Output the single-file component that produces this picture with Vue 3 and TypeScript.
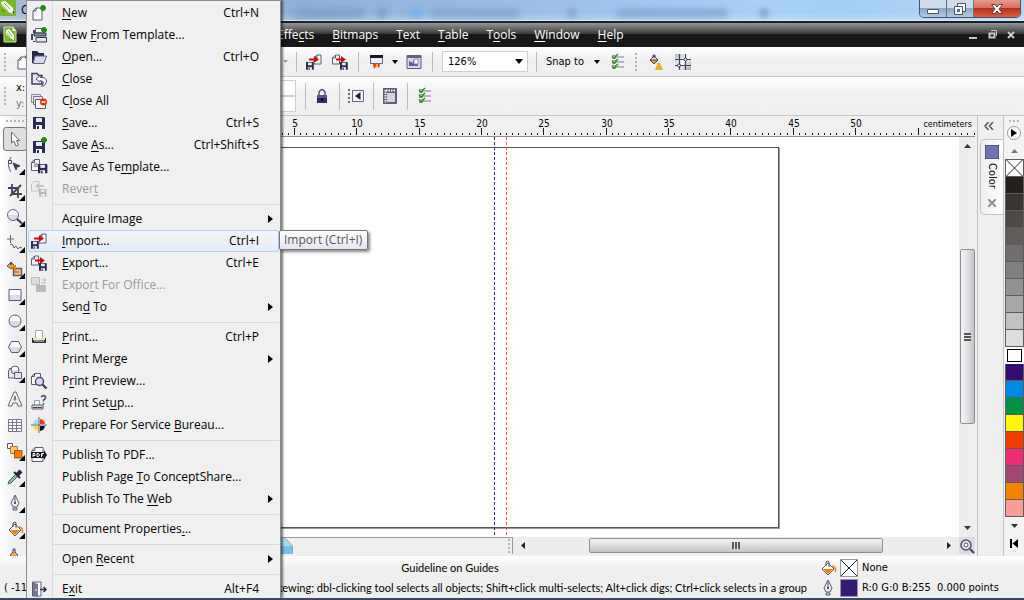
<script setup lang="ts">
import { ref } from 'vue'

interface MenuEntry {
  label?: string
  icon?: string
  keys?: string
  sub?: boolean
  off?: boolean
  hot?: boolean
}

const disk = (x: number, y: number, s: number, c = '#2b2b52') =>
  `<g transform="translate(${x} ${y}) scale(${s})"><path d="M0 0H11L12 1V12H0z" fill="${c}"/><path d="M3 1H9V5H3z" fill="#e8e8f4"/><path d="M3 8H9V12H3z" fill="#fff"/><path d="M4 9H6V12H4z" fill="${c}"/></g>`
const sheet = (x: number, y: number, w: number, h: number, c = '#5a5a78') =>
  `<path d="M${x + 3} ${y}H${x + w}V${y + h}H${x}V${y + 3}z" fill="#fbfbfe" stroke="${c}"/><path d="M${x} ${y + 3}H${x + 3}V${y}" fill="none" stroke="${c}"/>`
const star = (x: number, y: number) =>
  `<path d="M${x - 3} ${y}H${x + 3}M${x} ${y - 3}V${y + 3}M${x - 2} ${y - 2}L${x + 2} ${y + 2}M${x + 2} ${y - 2}L${x - 2} ${y + 2}" stroke="#1f8a12" stroke-width="1.8"/>`
const bucket = '<path d="M2 9L8 3L14 9L8 15z" fill="#fff" stroke="#5a5a78"/><path d="M3 9H13L8 14z" fill="#f08400"/><path d="M6 6V2Q8 0 9 2V7" fill="none" stroke="#44445e"/><path d="M12 6Q16 6 15.500 12" fill="none" stroke="#f08400" stroke-width="1.500"/>'
const checks = '<path d="M7 3H15M7 8H15M7 13H15" stroke="#7c7c98" stroke-width="1.200"/><path d="M3.500 1.500H6.500V4.500H3.500zM3.500 6.500H6.500V9.500H3.500zM3.500 11.500H6.500V14.500H3.500z" fill="#fff" stroke="#999"/><path d="M3 2L5 4L9 0M3 7L5 9L9 5M3 12L5 14L9 10" fill="none" stroke="#1f8a12" stroke-width="1.300"/>'
const arrowIn = 'fill="#c80f0f"'

const icons: Record<string, string> = {
  logo: '<path d="M0 0H16V16H0z" fill="#7ab62c"/><path d="M1 2L5 1L13 8L14 14L8 12L2 6z" fill="#fff"/><path d="M4 3L10 9M2.500 5L8 11" stroke="#7ab62c"/><path d="M1 8L7 12L3 12z" fill="#5b9a1c"/><path d="M12 12L14 11V14z" fill="#234"/>',
  docLogo: '<path d="M2 0H11L14 4V15H2z" fill="#7ab62c" stroke="#cfe6a8"/><path d="M10.500 0V4H14z" fill="#eef7df"/><path d="M4 3L7 2L12 8L12 13L8 11L4 7z" fill="#fff"/><path d="M6 4L10 9M5 6L8 10" stroke="#7ab62c"/>',
  new: sheet(2, 3, 9, 12) + star(12, 3),
  template: '<path d="M4.500 1.500H12.500V6H4.500z" fill="#fff" stroke="#5a5a78"/><path d="M3 3V6M1 7V13M3 14V15" stroke="#44445e" stroke-width="2"/><path d="M3 6H15V9H3z" fill="#8c8ca6" stroke="#333353"/><path d="M5 10.500H15.500V15H5z" fill="#e4e4ef" stroke="#333353"/>' + star(13, 3),
  open: '<path d="M1 2H6L8 4H13V14H1z" fill="#252a4a"/><path d="M4 7H15.500L13 14.500H2z" fill="#d9dbe8" stroke="#5a5f80"/>',
  close: '<path d="M1 2.500H6L8 4.500H11V13H1z" fill="#e2e3ec" stroke="#3b3f5c" stroke-width="1.500"/><path d="M5 8L9 4.500V6.500Q16 6 15.500 11Q14.500 15 10.500 15.500Q13.500 12 12 10.500L9 9.500V11z" fill="#fff" stroke="#55597a"/>',
  closeAll: '<path d="M.5 1.500H9.500V9.500H.5z" fill="#e5e5ef" stroke="#8a8aa0"/><path d="M2.500 3.500H11.500V11.500H2.500z" fill="#e5e5ef" stroke="#777790"/><path d="M4.500 6.500H14.500V15.500H4.500z" fill="#fff" stroke="#5a5a78"/><circle cx="12.500" cy="9" r="3.500" fill="#f2290e"/><path d="M10.500 9H14.500" stroke="#fff" stroke-width="1.500"/>',
  save: disk(2, 2, 1),
  saveAs: disk(2, 4, 1) + star(13, 3),
  saveTpl: sheet(0.5, 0.5, 8, 11) + '<path d="M3 5H7M3 7H7" stroke="#5a5a78"/>' + disk(7, 5, 0.78),
  revert: '<g opacity=".5"><path d="M.5 3L3 .5H8V10H.5z" fill="#eee" stroke="#999"/><path d="M4 5L8 2V4H13V6H8V8z" fill="#999"/></g>' + disk(8, 8, 0.62, '#b5b5b5'),
  import: disk(0, 8, 0.65) + sheet(8, 1, 7, 9) + `<path ${arrowIn} d="M3 4.500H8V2L13 5.500L8 9V6.500H3z"/>`,
  export: sheet(0.5, 1, 7, 9) + disk(8, 8, 0.65) + `<path ${arrowIn} d="M4 4.500H9V2L14 5.500L9 9V6.500H4z"/>`,
  office: '<path d="M.5 .5H8.500V7.500H.5z" fill="#ddd" stroke="#bbb"/><path d="M5 8H15V15H5z" fill="#b9b9b9"/><path d="M10 3H15M13 1L15 3L13 5M15 6H10" fill="none" stroke="#bbb"/>',
  print: '<path d="M4.500 1.500H11.500V9.500H4.500z" fill="#fff" stroke="#8fb0ac"/><path d="M1 9H15V14H1z" fill="#333344"/><path d="M2 9H14V11H2z" fill="#eeeebb"/><path d="M3 12H13" stroke="#ddd"/>',
  preview: sheet(0.5, 0.5, 9, 11) + '<circle cx="8.500" cy="8.500" r="4" fill="#d8dcf0" stroke="#4c4c68" stroke-width="1.500"/><path d="M11.500 11.500L15.500 15.500" stroke="#33334d" stroke-width="2"/>',
  setup: '<path d="M3.500 5.500H8.500V11H3.500z" fill="#fff" stroke="#7fa9b5"/><path d="M1 10H12V14H1z" fill="#dfe2cf" stroke="#5a5a78"/><path d="M2 12.500H11" stroke="#444"/><path d="M10 2Q12-.5 14.500 1.500Q15 4 12.500 5V6.500M12.500 8V9.500" fill="none" stroke="#4c4c68" stroke-width="1.500"/>',
  bureau: '<path d="M7 2A6 6 0 0 0 2 7H7z" fill="#a8dbe8"/><path d="M9 2A6 6 0 0 1 14 7H9z" fill="#ee3b19"/><path d="M7 14A6 6 0 0 1 2 9H7z" fill="#f5df3b"/><path d="M9 14A6 6 0 0 0 14 9H9z" fill="#111"/><path d="M8 0V16M0 8H16" stroke="#fff" stroke-width="2"/><path d="M8 0V16M0 8H16" stroke="#55556b"/>',
  pdf: sheet(1, 0.5, 11, 14) + '<path d="M0 5H13V3L16 8L13 13V11H0z" fill="#15151d"/><path d="M2 10V6.500H4V8.500H2M6 6.500H7.500L8.500 8L7.500 9.500H6zM10.500 10V6.500H13M10.500 8H12" fill="none" stroke="#fff"/>',
  exit: '<path d="M1.500 1H10V15H1.500z" fill="#fff" stroke="#5a5a78"/><path d="M2 1L7 3V16L2 15z" fill="#77778f"/><path d="M5 8V10" stroke="#fff"/><path d="M9 8.500H15M12.500 6L15 8.500L12.500 11" fill="none" stroke="#2f2f45" stroke-width="1.500"/>',
  pick: '<path d="M4.500 1V12L7 10L9 15L11.500 14L9.500 9.500H12.500z" fill="#fff" stroke="#66667f"/>',
  shape: '<path d="M4 0Q-1 8 4 15" fill="none" stroke="#5a5a78"/><path d="M1.500 3.500H4.500V6.500H1.500z" fill="#fff" stroke="#44445e"/><path d="M6 6L13 9L10 10L9 13z" fill="#3d3d5a" stroke="#3d3d5a"/>',
  crop: '<path d="M1 5H11V15M5 1V11H15M3 13L14 2" fill="none" stroke="#44445e" stroke-width="1.800"/>',
  zoom: '<circle cx="6" cy="6" r="5.500" fill="url(#shade)" stroke="#66667f"/><path d="M10 10L15 14.500" stroke="#3c3c56" stroke-width="2.200"/>',
  freehand: '<path d="M3.500 0V8M0 4H7" stroke="#66667f"/><path d="M3 10L5 9L7 13L9 11L11 14L13 12L15 13" fill="none" stroke="#5a5a78"/>',
  smart: '<path d="M0 5L4 1L8 5L4 8z" fill="#f0a030" stroke="#5a5a78"/><path d="M4 1V4" stroke="#44445e" stroke-width="1.500"/><path d="M6.500 7.500H14.500V14.500H6.500z" fill="#f3c27c" stroke="#5a5a78" stroke-width="1.500"/><path d="M8 4V11H12" fill="none" stroke="#f08400" stroke-width="2"/>',
  rect: '<path d="M2 2.500H14V13.500H2z" fill="url(#shade)" stroke="#5a5a78"/>',
  ellipse: '<circle cx="8" cy="8" r="6" fill="url(#shade)" stroke="#5a5a78"/>',
  polygon: '<path d="M4.500 2.500H11.500L14.500 8L11.500 13.500H4.500L1.500 8z" fill="url(#shade)" stroke="#5a5a78"/>',
  basic: '<path d="M1.500 6L3 3L12 13H1.500z" fill="#eee" stroke="#5a5a78"/><circle cx="8" cy="5" r="4" fill="url(#shade)" stroke="#5a5a78"/><path d="M7.500 7.500H14.500V13.500H7.500z" fill="#e4e4ef" stroke="#5a5a78"/>',
  text: '<path d="M1 15L7 1H9L15 15H11L10 12H6L5 15zM7 9H9L8 5z" fill="#f3f3fa" stroke="#66667f"/>',
  table: '<path d="M1.500 2.500H14.500V14.500H1.500zM1.500 5.500H14.500M1.500 8.500H14.500M1.500 11.500H14.500M5.500 2.500V14.500M9.500 2.500V14.500" fill="#fff" stroke="#77778f"/>',
  blend: '<path d="M.5 .5H5.500V5.500H.5z" fill="#fff" stroke="#5a5a78"/><path d="M3.500 3.500H10.500V10.500H3.500z" fill="#ffca6a" stroke="#b07b28"/><path d="M7.500 7.500H15V15H7.500z" fill="#f57b00" stroke="#a85510"/>',
  dropper: '<path d="M1 15L2 12L9 5L11 7L4 14z" fill="#8fb5b2" stroke="#47646b"/><path d="M7 3L13 9" stroke="#24243b" stroke-width="2"/><path d="M10 6L14 2" stroke="#24243b" stroke-width="4"/>',
  pen: '<path d="M8 0L4 8L6 12H10L12 8zM6 13H10V15H6z" fill="#eee" stroke="#5a5a78"/><path d="M8 1V8" stroke="#5a5a78"/><circle cx="8" cy="8" r="1" fill="#333"/>',
  bucket,
  interactive: '<path d="M3 8L7 4L11 8L7 12z" fill="#f0a050" stroke="#5a5a78"/><path d="M6 6V2H8V6" fill="#ddd" stroke="#44445e"/>',
  launcher: '<path d="M2.500 1.500H14.500V9.500H2.500z" fill="#eeeef6" stroke="#66667f"/><path d="M2 1H15V4H2z" fill="#17172a"/><path d="M5 10H12L11 14L8.500 12L6 15z" fill="#ee371b"/><path d="M8 10H10V13H8z" fill="#ffb500"/>',
  welcome: '<path d="M1 1.500H15V14.500H1z" fill="#d6d8ee" stroke="#5a5a78"/><path d="M1 1H15V4H1z" fill="#62627f"/><path d="M3 7L7 9V6H12V12H3z" fill="#5b5d94"/><path d="M8 5H12V10H8z" fill="#fff" stroke="#8a8cb4"/>',
  checks,
  grid: '<path d="M0 0H16V16H0z" fill="url(#sky)"/><path d="M4.500 0V16M10.500 0V16M0 5.500H16M0 11.500H16" stroke="#44445e" stroke-width="1.200"/><circle cx="10.500" cy="5.500" r="1.500" fill="#fff" stroke="#333"/><circle cx="4" cy="11.500" r="1.500" fill="#fff" stroke="#333"/>',
  spill: '<path d="M1 6L5 2L9 6L5 10z" fill="#e99a33" stroke="#44445e"/><path d="M1 6L5 2L9 6z" fill="#e6e6f0" stroke="#44445e"/><path d="M4 4V1H6V4" fill="none" stroke="#44445e"/><path d="M8.500 9H11L14 16H6z" fill="#eeb02a"/>',
  lock: '<path d="M5 8V4Q8-1 11 4V8" fill="none" stroke="#55556f" stroke-width="1.500"/><path d="M3 7H13V15H3z" fill="#2c2c62"/><path d="M3 7H13V10H3z" fill="#55558d"/><path d="M8 10V13" stroke="#111" stroke-width="2"/>',
  mirror: '<path d="M1 1V15" stroke="#66667f" stroke-width="2" stroke-dasharray="2 2"/><path d="M4.500 2.500H15.500V13.500H4.500z" fill="#f5f5fa" stroke="#66667f"/><path d="M12.500 4V12L7 8z" fill="#222235"/>',
  notebook: '<path d="M1.500 .5H14.500V15.500H1.500z" fill="#5d5d79" stroke="#5d5d79"/><path d="M5 5H13V14H5z" fill="#d4d4de"/><path d="M3.500 2V15M4 2.500H14" stroke="#fff" stroke-width="2" stroke-dasharray="1.500 1"/>',
  loupe: '<circle cx="7" cy="7" r="5" fill="#e4e6f3" stroke="#50506c" stroke-width="1.500"/><circle cx="7" cy="7" r="2" fill="#fff" stroke="#50506c"/><path d="M11 11L15 15" stroke="#44445e" stroke-width="2.200"/>',
}

const groups: MenuEntry[][] = [
  [
    { label: '&New', icon: 'new', keys: 'Ctrl+N' },
    { label: 'New &From Template...', icon: 'template' },
    { label: '&Open...', icon: 'open', keys: 'Ctrl+O' },
    { label: '&Close', icon: 'close' },
    { label: 'C&lose All', icon: 'closeAll' },
    { label: '&Save...', icon: 'save', keys: 'Ctrl+S' },
    { label: 'Save &As...', icon: 'saveAs', keys: 'Ctrl+Shift+S' },
    { label: 'Save As Te&mplate...', icon: 'saveTpl' },
    { label: 'Rever&t', icon: 'revert', off: true },
  ],
  [
    { label: 'Ac&quire Image', sub: true },
    { label: '&Import...', icon: 'import', keys: 'Ctrl+I', hot: true },
    { label: '&Export...', icon: 'export', keys: 'Ctrl+E' },
    { label: 'Expo&rt For Office...', icon: 'office', off: true },
    { label: 'Sen&d To', sub: true },
  ],
  [
    { label: '&Print...', icon: 'print', keys: 'Ctrl+P' },
    { label: 'Print Mer&ge', sub: true },
    { label: 'P&rint Preview...', icon: 'preview' },
    { label: 'Print Set&up...', icon: 'setup' },
    { label: 'Prepare For Service &Bureau...', icon: 'bureau' },
  ],
  [
    { label: 'Publis&h To PDF...', icon: 'pdf' },
    { label: 'Publish Page &To ConceptShare...' },
    { label: 'Publish To The &Web', sub: true },
  ],
  [{ label: 'Document Properties&...' }],
  [{ label: 'Open &Recent', sub: true }],
  [{ label: 'E&xit', icon: 'exit', keys: 'Alt+F4' }],
]

const split = (label = '') => {
  const i = label.indexOf('&')
  return [label.slice(0, i), label[i + 1], label.slice(i + 2)]
}

const menus = ['Effe&cts', '&Bitmaps', '&Text', '&Table', 'T&ools', '&Window', '&Help']
const tools = ['pick', 'shape', 'crop', 'zoom', 'freehand', 'smart', 'rect', 'ellipse', 'polygon', 'basic', 'text', 'table', 'blend', 'dropper', 'pen', 'bucket', 'interactive']
const plainTools = ['pick', 'text', 'table', 'interactive']
const swatches = ['#24201c', '#393533', '#4e4945', '#605c5b', '#706f6e', '#81807f', '#929292', '#a8a8a7', '#c2c1c0', '#dddddc', '#ffffff', '#330d70', '#0088e6', '#009149', '#fff700', '#ee3c00', '#f22c75', '#a34777', '#f58300', '#fb9d97']

const unit = 62.35
const firstMark = 267
const majors = Array.from({ length: 30 }, (_, i) => ({ x: Math.round(firstMark + i * unit), n: 5 + i * 5 }))
const minors = Array.from({ length: 300 }, (_, i) => Math.round(firstMark - unit + (i * unit) / 10))
const zoomLevel = ref('126%')
</script>

<template>
  <div class="app">
    <svg class="defs" aria-hidden="true">
      <linearGradient id="shade" x1="0" y1="0" x2="0" y2="1">
        <stop offset=".5" stop-color="#fff" /><stop offset=".5" stop-color="#dcdce8" />
      </linearGradient>
      <linearGradient id="sky" x1="0" y1="0" x2="1" y2="1">
        <stop offset="0" stop-color="#a9bccb" /><stop offset=".5" stop-color="#fff" /><stop offset="1" stop-color="#8fa3b5" />
      </linearGradient>
    </svg>

    <header class="title">
      <svg class="ic" viewBox="0 0 16 16" v-html="icons.logo"></svg>
      <span class="caption">C</span>
      <div class="ghosts"><i class="g1"></i><i class="g2"></i><i class="g3"></i><i class="g4"></i><i class="g5"></i><i class="g6"></i><i class="g7"></i></div>
      <div class="winbtns">
        <button aria-label="Minimize"><svg width="14" height="12"><path d="M1.500 6.500H12.500V10.500H1.500z" fill="#fff" stroke="#4b5468" /></svg></button>
        <button aria-label="Restore"><svg width="14" height="13"><path d="M4.500 1.500H12.500V9.500H4.500z" fill="#fff" stroke="#4b5468" /><path d="M1.500 4.500H9.500V12.500H1.500z" fill="#fff" stroke="#4b5468" /><path d="M4.500 7.500H6.500V9.500H4.500z" fill="#89a" stroke="#4b5468" /></svg></button>
        <button class="x" aria-label="Close"><svg width="14" height="12"><path d="M1.500 1.500H5L7 4L9 1.500H12.500L9 6L12.500 10.500H9L7 8L5 10.500H1.500L5 6z" fill="#fff" stroke="#5c3a42" /></svg></button>
      </div>
    </header>

    <nav class="menubar">
      <svg class="ic" viewBox="0 0 16 16" v-html="icons.docLogo"></svg>
      <div class="menus">
        <button v-for="m in menus" :key="m">{{ split(m)[0] }}<u>{{ split(m)[1] }}</u>{{ split(m)[2] }}</button>
      </div>
      <svg class="docbtns" width="46" height="10" fill="none" stroke="#c8c8c8"><path d="M0 8H8" stroke-width="2" /><path d="M20.500 3.500H25.500V7.500H20.500z" stroke-width="2" /><path d="M22 .5H27.500V6" /><path d="M39 2L45 8M45 2L39 8" stroke-width="2" /></svg>
    </nav>

    <div class="bar std">
      <i class="grip"></i>
      <div class="left"><svg class="ic" viewBox="0 0 16 16" v-html="icons.new"></svg><svg class="arr dim" width="5" height="3"><path d="M0 0H5L2.500 3z" /></svg></div>
      <i class="sep"></i>
      <button aria-label="Import"><svg class="ic" viewBox="0 0 16 16" v-html="icons.import"></svg></button>
      <button aria-label="Export"><svg class="ic" viewBox="0 0 16 16" v-html="icons.export"></svg></button>
      <i class="sep"></i>
      <button class="near" aria-label="Application launcher"><svg class="ic" viewBox="0 0 16 16" v-html="icons.launcher"></svg></button>
      <svg class="arr" width="6" height="4"><path d="M0 0H6L3 4z" /></svg>
      <button aria-label="Welcome screen"><svg class="ic" viewBox="0 0 16 16" v-html="icons.welcome"></svg></button>
      <i class="sep"></i>
      <span class="combo">
        <select v-model="zoomLevel" aria-label="Zoom level"><option>126%</option><option>100%</option></select>
        <svg width="8" height="5"><path d="M0 0H8L4 5z" /></svg>
      </span>
      <i class="sep"></i>
      <button class="snap">Snap to<svg width="6" height="4"><path d="M0 0H6L3 4z" /></svg></button>
      <button aria-label="Options"><svg class="ic" viewBox="0 0 16 16" v-html="icons.checks"></svg></button>
      <i class="grip in"></i>
      <button aria-label="Paint"><svg class="ic" viewBox="0 0 16 16" v-html="icons.spill"></svg></button>
      <button aria-label="Mesh"><svg class="ic" viewBox="0 0 16 16" v-html="icons.grid"></svg></button>
    </div>

    <div class="bar prop">
      <i class="grip"></i>
      <div class="left">
        <div class="xy"><label for="px">x:</label><label for="py" class="soft">y:</label></div>
        <div class="boxes"><input id="px" /><input id="py" /></div>
      </div>
      <i class="sep"></i>
      <button aria-label="Lock"><svg class="ic" viewBox="0 0 16 16" v-html="icons.lock"></svg></button>
      <i class="sep"></i>
      <button aria-label="Mirror"><svg class="ic" viewBox="0 0 16 16" v-html="icons.mirror"></svg></button>
      <i class="sep"></i>
      <button aria-label="Page layout"><svg class="ic" viewBox="0 0 16 16" v-html="icons.notebook"></svg></button>
      <i class="sep"></i>
      <button aria-label="Options"><svg class="ic" viewBox="0 0 16 16" v-html="icons.checks"></svg></button>
    </div>

    <main class="work">
      <aside class="tools">
        <i class="hgrip"></i>
        <button v-for="t in tools" :key="t" :class="{ on: t === 'pick', fly: !plainTools.includes(t) }" :aria-label="t">
          <svg class="ic" viewBox="0 0 16 16" v-html="icons[t]"></svg>
        </button>
      </aside>

      <section class="doc">
        <svg class="ruler">
          <path v-for="(x, i) in minors" :key="'m' + i" :d="`M${x + 0.5} 17V19`" />
          <g v-for="m in majors" :key="m.n">
            <path :d="`M${m.x + 0.5} 12V19`" />
            <text v-if="m.n < 55" :x="m.x + 1" y="11">{{ m.n }}</text>
          </g>
          <text class="end" x="100%" dx="-3" y="11">centimeters</text>
        </svg>
        <div class="view">
          <div class="canvas">
            <div class="page"></div>
            <i class="guide blue"></i>
            <i class="guide red"></i>
          </div>
          <div class="vscroll">
            <svg width="7" height="4"><path d="M0 4L3.500 0L7 4z" /></svg>
            <div class="track"><span class="thumb"><i></i></span></div>
            <svg width="7" height="4"><path d="M0 0H7L3.500 4z" /></svg>
          </div>
        </div>
        <div class="foot">
          <div class="pages"><svg width="12" height="16"><path d="M0 0H4L11.500 8V16H0z" fill="#a9dcf3" /><path d="M0 8H11V16H0z" fill="#74c2ea" /><path d="M4 0L11.500 8V16" fill="none" stroke="#8aa" /></svg><i class="grip"></i></div>
          <div class="hscroll">
            <svg width="4" height="7"><path d="M4 0V7L0 3.500z" /></svg>
            <div class="track"><span class="thumb"><i></i></span></div>
            <svg width="4" height="7"><path d="M0 0V7L4 3.500z" /></svg>
          </div>
          <button class="nav" aria-label="Navigator"><svg class="ic" viewBox="0 0 16 16" v-html="icons.loupe"></svg></button>
        </div>
      </section>

      <aside class="docker">
        <button class="fold" aria-label="Expand docker"><svg width="10" height="8" fill="none" stroke="#555" stroke-width="1.500"><path d="M4.500 0L1 4L4.500 8M9 0L5.500 4L9 8" /></svg></button>
        <div class="tab">
          <i></i><span>Color</span>
          <svg width="8" height="8" stroke="#909090" stroke-width="2"><path d="M0 0L8 8M8 0L0 8" /></svg>
        </div>
      </aside>

      <aside class="palette">
        <i class="hgrip"></i>
        <button class="play" aria-label="Palette menu"><svg width="6" height="8"><path d="M0 0L6 4L0 8z" /></svg></button>
        <svg class="pa" width="7" height="4" fill="#777"><path d="M0 4L3.500 0L7 4z" /></svg>
        <div class="chips">
          <button class="none" aria-label="No color"><svg viewBox="0 0 16 16"><path d="M0 0L16 16M16 0L0 16" stroke="#222" /></svg></button>
          <button v-for="s in swatches" :key="s" :class="{ sel: s === '#ffffff' }" :style="{ backgroundColor: s }" :aria-label="s"></button>
        </div>
        <svg class="pd" width="7" height="4" fill="#333"><path d="M0 0H7L3.500 4z" /></svg>
        <svg class="pe" width="8" height="9"><path d="M0 0H2V9H0zM8 0V9L2.500 4.500z" /></svg>
      </aside>
    </main>

    <footer class="status">
      <span class="pos">( -11</span>
      <div class="hint">
        <p class="mid">Guideline on Guides</p>
        <p>skewing; dbl-clicking tool selects all objects; Shift+click multi-selects; Alt+click digs; Ctrl+click selects in a group</p>
      </div>
      <div class="paint">
        <svg class="ic" viewBox="0 0 16 16" v-html="icons.bucket"></svg>
        <svg class="cell" viewBox="0 0 16 16"><path d="M0 0L16 16M16 0L0 16" stroke="#222" /></svg>
        <span>None</span>
        <svg class="ic" viewBox="0 0 16 16" v-html="icons.pen"></svg>
        <i class="cell ink"></i>
        <span>R:0 G:0 B:255&nbsp; 0.000 points</span>
      </div>
    </footer>

    <div class="drop" role="menu">
      <ul v-for="(g, gi) in groups" :key="gi">
        <li v-for="e in g" :key="e.label">
          <button role="menuitem" :disabled="e.off" :class="{ hot: e.hot }">
            <span class="slot"><svg v-if="e.icon" class="ic" viewBox="0 0 16 16" v-html="icons[e.icon]"></svg></span>
            <span class="lbl">{{ split(e.label)[0] }}<u>{{ split(e.label)[1] }}</u>{{ split(e.label)[2] }}</span>
            <span v-if="e.keys" class="keys">{{ e.keys }}</span>
            <svg v-if="e.sub" class="more" width="5" height="8"><path d="M0 0L5 4L0 8z" /></svg>
          </button>
        </li>
      </ul>
    </div>
    <div class="tip" role="tooltip">Import (Ctrl+I)</div>
  </div>
</template>

<style>
body { margin: 0; overflow: hidden; }
</style>

<style scoped>
.app { position: relative; display: flex; flex-direction: column; height: 100vh; box-sizing: border-box; overflow: hidden; background: #efefef; color: #000; font: 11px/20px "DejaVu Sans Condensed", "Noto Sans", sans-serif; border-bottom: 2px solid #3c4a60; }
.app *, .app *::before, .app *::after { box-sizing: border-box; }
.defs { position: absolute; width: 0; height: 0; }
button { font: inherit; color: inherit; background: none; border: 0; padding: 0; margin: 0; display: flex; align-items: center; }
svg { display: block; flex: none; }
.ic { width: 16px; height: 16px; overflow: visible; }
u { text-underline-offset: 2px; }

.title { display: flex; flex: none; height: 23px; background: linear-gradient(#fff0 60%, #ffffff40), linear-gradient(90deg, #a9bcd2, #8fb0d6 28%, #9cc0e8 55%, #a8d2f5 75%, #a3d0f4 82%, #b4d6f2); border-bottom: 2px solid #182030; box-shadow: inset 0 -1px #d7e8f7; }
.title .caption { font: 12px/20px "Open Sans", sans-serif; margin-left: 5px; }
.ghosts { flex: 1; display: flex; align-items: center; padding-left: 265px; filter: blur(3px); overflow: hidden; }
.ghosts i { flex: none; height: 8px; margin-top: 4px; border-radius: 4px; }
.g1 { width: 70px; background: #7f9fc3; }
.g2 { width: 8px; background: #7492b4; margin-left: 14px; }
.g3 { width: 12px; background: #6fb0ea; margin-left: 24px; }
.g4 { width: 90px; background: #86a8ce; margin-left: 8px; }
.g5 { width: 8px; background: #7b9dc2; margin-left: 48px; }
.g6 { width: 112px; background: #86a9d0; margin-left: 40px; }
.g7 { width: 8px; background: #6f93ba; margin-left: 32px; }
.winbtns { display: flex; flex: none; height: 18px; margin-right: 3px; border: 1px solid #445264; border-top: 0; border-radius: 0 0 5px 5px; overflow: hidden; }
.winbtns button { width: 27px; justify-content: center; border-right: 1px solid #5f7389; background: linear-gradient(#cfdbe8 0 45%, #8fa6bf 50%, #b3cbe2); }
.winbtns .x { width: 46px; border: 0; background: linear-gradient(#e39b8c 0, #d9705c 45%, #b8301c 50%, #dc5f44); }

.menubar { display: flex; flex: none; align-items: center; height: 24px; padding: 0 9px 0 2px; background: linear-gradient(#969696, #3a3a3a 45%, #181818 46%); color: #fff; font: 12px/20px "Open Sans", sans-serif; }
.menus { display: flex; flex: 1; gap: 18px; padding-left: 259px; }

.bar { display: flex; flex: none; align-items: center; background: linear-gradient(#fff, #f0f0f0 45%, #efefef); border-bottom: 1px solid #c6c6c6; }
.std { height: 30px; }
.prop { height: 39px; }
.left { display: flex; align-items: center; flex: none; width: 288px; }
.std .left { justify-content: space-between; padding: 0 8px 0 8px; }
.grip { flex: none; width: 2px; height: 18px; margin-left: 4px; margin-right: 2px; background: repeating-linear-gradient(#b4b4b4 0 2px, #0000 2px 4px); }
.sep { flex: none; width: 1px; height: 20px; background: #bdbdbd; margin-right: 9px; }
.prop .sep { height: 27px; }
.bar button { margin-right: 10px; }
.prop button { margin-right: 9px; }
.bar .near { margin-right: 8px; }
.arr { margin-right: 8px; }
.dim { fill: #999; margin: 0; }
.combo { display: flex; align-items: center; width: 86px; height: 21px; margin-right: 8px; padding-right: 4px; background: #fff; border: 1px solid #cdd0dc; flex: none; }
.combo select { appearance: none; flex: 1; min-width: 0; border: 0; background: none; padding: 0 0 0 5px; font: inherit; outline: 0; }
.snap { gap: 10px; white-space: nowrap; }
.std .sep + .snap { margin-right: 9px; }
.grip.in { margin: 0 12px 0 0; height: 18px; }
.prop .left { width: 297px; padding-left: 8px; justify-content: space-between; }
.prop .sep { margin-right: 8px; }
.xy { display: flex; flex-direction: column; line-height: 16px; }
.soft { color: #777; }
.boxes { display: flex; flex-direction: column; margin-right: 9px; }
.boxes input { width: 100px; height: 16px; border: 1px solid #cdd0dc; background: #fff; padding: 0; }

.work { display: flex; flex: 1; min-height: 0; }
.tools { flex: none; width: 27px; overflow: hidden; background: linear-gradient(90deg, #fff, #efefef 60%); }
.hgrip { display: block; height: 2px; margin: 4px 2px 5px 6px; background: repeating-linear-gradient(90deg, #b4b4b4 0 2px, #0000 2px 4px); }
.tools button { position: relative; width: 24px; height: 26px; margin-left: 3px; padding-left: 4px; }
.tools .on { border: 1px solid #777; border-radius: 3px; padding-left: 3px; height: 24px; margin-top: 1px; margin-bottom: 1px; background: #dedede; }
.tools .fly::after { content: ""; position: absolute; right: 2px; bottom: 3px; border: 3px solid; border-color: #0000 #000 #000 #0000; }

.doc { display: flex; flex: 1; flex-direction: column; min-width: 0; padding-bottom: 2px; }
.ruler { width: 100%; height: 21px; border-bottom: 1px solid #8c8c8c; background: #f0f0f0; stroke: #111; overflow: hidden; }
.ruler text { stroke: none; fill: #000; font-size: 10px; text-anchor: middle; }
.ruler .end { font-size: 9px; text-anchor: end; }
.view { display: flex; flex: 1; min-height: 0; }
.canvas { position: relative; flex: 1; overflow: hidden; background: #fff; }
.page { position: absolute; left: -10px; top: 10px; width: 762px; height: 381px; border: 1px solid #555; box-shadow: 1px 1px #999; }
.guide { position: absolute; top: 0; bottom: 0; width: 1px; }
.blue { left: 467px; background: repeating-linear-gradient(#3b2a91 0 3px, #0000 3px 5px); }
.red { left: 479px; background: repeating-linear-gradient(#f2602f 0 3px, #0000 3px 5px); }
.vscroll { display: flex; flex-direction: column; align-items: center; width: 16px; padding: 7px 0; background: #ededed; fill: #333; }
.vscroll .track { flex: 1; width: 15px; padding-top: 101px; }
.vscroll .thumb { display: flex; align-items: center; justify-content: center; height: 175px; border: 1px solid #8e8e92; border-radius: 2px; background: linear-gradient(90deg, #f4f4f4, #e4e4e6 45%, #c3c3c9); }
.vscroll .thumb i { width: 7px; height: 8px; background: repeating-linear-gradient(#555 0 2px, #eee 2px 3px); }
.foot { display: grid; grid-template-columns: 487fr 446fr 16px; height: 17px; flex: none; }
.pages { display: flex; align-items: center; justify-content: space-between; min-width: 0; padding-left: 254px; border: solid #999; border-width: 1px 1px 0 0; }
.pages .grip { height: 14px; }
.hscroll { display: flex; align-items: center; padding: 0 8px; background: #ededed; fill: #222; }
.hscroll .track { flex: 1; padding-left: 64px; }
.hscroll .thumb { display: flex; width: 82%; height: 15px; align-items: center; justify-content: center; border: 1px solid #8e8e92; border-radius: 2px; background: linear-gradient(#f4f4f4, #e0e0e2 45%, #c3c3c5); }
.hscroll .thumb i { width: 8px; height: 7px; background: repeating-linear-gradient(90deg, #555 0 2px, #eee 2px 3px); }
.nav { width: 16px; background: #dcdce0; }

.docker { flex: none; width: 27px; margin-left: 2px; border: solid #c3c3c3; border-width: 0 1px; }
.fold { width: 100%; height: 20px; padding-left: 6px; }
.tab { display: flex; flex-direction: column; align-items: center; margin: 3px 0 0 2px; height: 76px; border: 1px solid #c3c3c3; border-width: 1px 0 1px 1px; border-radius: 5px 0 0 5px; background: linear-gradient(90deg, #efefef, #fff); }
.tab i { flex: none; width: 14px; height: 14px; margin: 5px 0 4px; background: #7172b4; border: 1px solid #55556c; }
.tab span { writing-mode: vertical-rl; line-height: 14px; height: 36px; }
.palette { flex: none; width: 20px; display: flex; flex-direction: column; align-items: center; background: #f3f3f3; }
.palette .hgrip { width: 10px; margin: 4px 0 3px; flex: none; }
.play { width: 14px; height: 14px; justify-content: center; flex: none; border: 1px solid #999; border-radius: 50%; background: #fff; margin-top: 1px; }
.pa { margin: 9px 0 6px; }
.chips { display: flex; flex-direction: column; width: 19px; flex: none; }
.chips button { height: 17px; border: 1px solid #5c5c5c; border-top-width: 0; }
.chips .none { height: 18px; border-top-width: 1px; background: #fff; }
.chips .none svg { width: 17px; height: 16px; }
.chips .sel { border: 1px solid #000; outline: 2px solid #fff; margin: 2px; height: 13px; }
.pd { margin: 7px 0 11px; }

.status { display: flex; flex: none; height: 42px; padding: 2px 0 0 4px; background: linear-gradient(#fff, #efefef 30%); white-space: nowrap; }
.pos { width: 89px; padding-top: 20px; }
.hint { flex: 1; min-width: 0; overflow: hidden; display: flex; flex-direction: column; align-items: flex-end; font-family: Lato, sans-serif; }
.hint p { margin: 0; }
.hint .mid { width: 100%; text-align: center; }
.paint { flex: none; display: grid; grid-template-columns: 16px 18px 162px; column-gap: 4px; align-items: center; margin-left: 13px; grid-auto-rows: 20px; }
.cell { width: 18px; height: 18px; border: 1px solid #999; background: #fff; }
.ink { background: #351b78; }

.drop { position: absolute; left: 26px; top: 0; bottom: 0; width: 255px; padding: 1px; border: solid #8e8e8e; border-width: 1px 1px 0; background: linear-gradient(90deg, #efefef 25px, #dcdcdc 25px 26px, #f0f0f0 26px); box-shadow: 2px 0 2px #0008; overflow: hidden; font: 12px/20px "Open Sans", sans-serif; }
.drop ul { list-style: none; margin: 0; padding: 0; }
.drop ul + ul { padding-top: 8px; background: linear-gradient(#dadada, #dadada) 25px 4px / 100% 1px no-repeat; }
.drop button { width: 100%; height: 22px; padding: 0 5px 0 3px; border: 1px solid #0000; border-radius: 3px; }
.drop button:disabled { color: #9a9a9a; }
.drop .hot { border-color: #aecff7; background: linear-gradient(#f4f6fa, #e6ebf5); }
.slot { width: 16px; margin-left: -1px; margin-right: 15px; }
.lbl { flex: 1; text-align: left; white-space: nowrap; }
.keys { margin-right: 14px; }
.tip { position: absolute; left: 279px; top: 230px; padding: 0 5px 0 4px; border: 1px solid #767676; border-radius: 2px; background: linear-gradient(#fff, #e4e5f0); box-shadow: 2px 2px 3px #0007; color: #575757; font: 12px/18px "Open Sans", sans-serif; }
</style>
